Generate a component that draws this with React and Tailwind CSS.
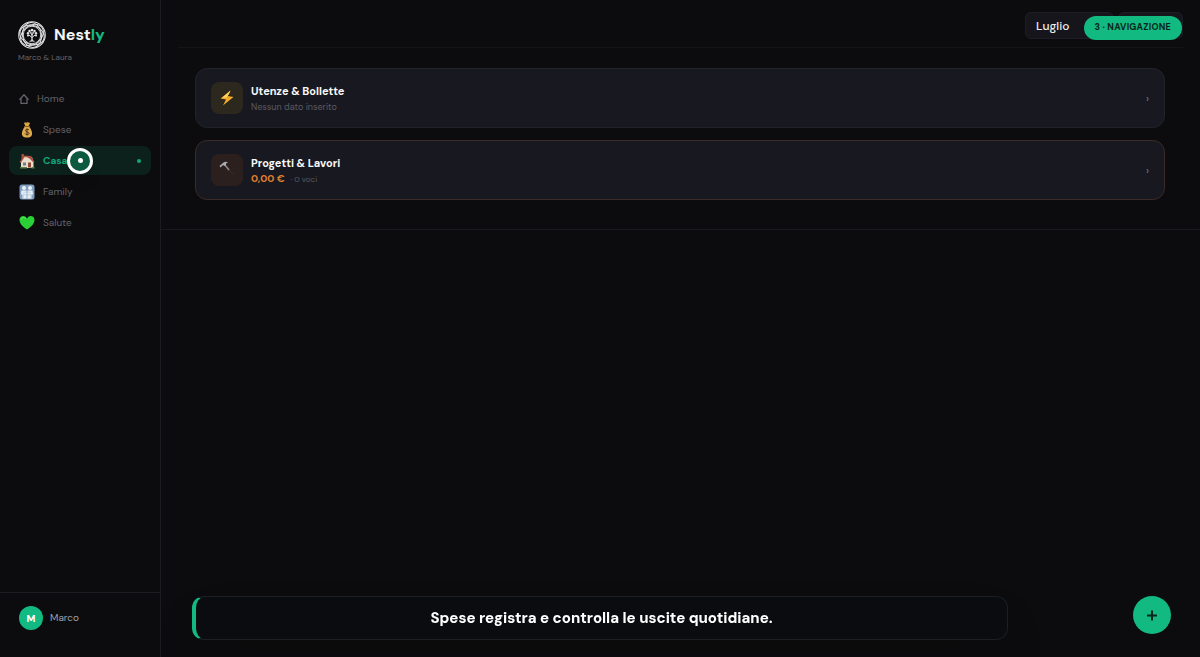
import React from "react";

const base = "block shrink-0";

function Logo() {
  return (
    <svg viewBox="0 0 56 56" className={`${base} size-7`} fill="none" stroke="#e4e4e4" aria-hidden="true">
      <circle cx="28" cy="28" r="26.5" strokeWidth="2.2" />
      <circle cx="28" cy="28" r="17.5" strokeWidth="1.8" />
      <ellipse cx="28" cy="28" rx="25" ry="19" strokeWidth="2" transform="rotate(20 28 28)" />
      <ellipse cx="28" cy="28" rx="25" ry="19" strokeWidth="2" transform="rotate(80 28 28)" />
      <ellipse cx="28" cy="28" rx="25" ry="19" strokeWidth="2" transform="rotate(140 28 28)" />
      <path d="M28 39V22M28 33l-6-5M28 33l6-5M28 28l-4-6M28 28l4-6" strokeWidth="2" strokeLinecap="round" />
      <path d="M23 40.5c3 0 4-2 5-4 1 2 2 4 5 4Z" fill="#e4e4e4" strokeWidth="1" />
      <g fill="#e4e4e4" stroke="none">
        <circle cx="28" cy="18" r="2.6" />
        <circle cx="23" cy="20" r="2.5" />
        <circle cx="33" cy="20" r="2.5" />
        <circle cx="20" cy="24.5" r="2.4" />
        <circle cx="36" cy="24.5" r="2.4" />
        <circle cx="20" cy="29" r="2.1" />
        <circle cx="36" cy="29" r="2.1" />
      </g>
    </svg>
  );
}

function HomeIcon() {
  return (
    <svg viewBox="0 0 10 12" className={`${base} h-3 w-2.5`} fill="none" stroke="currentColor" strokeWidth="1.3" aria-hidden="true">
      <path d="M2 10.3V6H1.2L5 1.8 8.8 6H8v4.3H2Z" />
    </svg>
  );
}

function MoneyIcon() {
  return (
    <svg viewBox="0 0 32 32" className={`${base} size-4`} aria-hidden="true">
      <path d="M10 2c2-2 4 0 6-1 2-1 4 0 6 1l-3 7h-6Z" fill="#d9a441" />
      <path d="M13 8h6c4 4 8 11 7 17-1 5-5 6-10 6S7 30 6 25c-1-6 3-13 7-17Z" fill="#dca94d" />
      <path d="M11 9h10" stroke="#8a5b1e" strokeWidth="2.4" strokeLinecap="round" />
      <path d="M20 16c-1-2-7-2-7 1 0 4 7 2 7 6 0 3-7 3-8 0M16 13v14" fill="none" stroke="#4b3313" strokeWidth="2" />
    </svg>
  );
}

function HouseIcon() {
  return (
    <svg viewBox="0 0 32 32" className={`${base} size-4`} aria-hidden="true">
      <path d="M5 2h5v11H5Z" fill="#a9483b" />
      <path d="M4 15 12 6l14 2 3 10v12H4Z" fill="#e9dcc8" />
      <path d="m1 18 10-13 13 1 7 12-2 1-8-8-6-3L4 20Z" fill="#a94f40" />
      <path d="m4 19 8-12 9 12Z" fill="#e9dcc8" />
      <path d="M18 19h6v10h-6Z" fill="#8c4936" />
      <path d="M8 19h6v6H8Z" fill="#5f8196" />
      <path d="M2 28h14v3H2ZM25 28h6v3h-6Z" fill="#5f7d46" />
    </svg>
  );
}

function FamilyIcon() {
  return (
    <svg viewBox="0 0 32 32" className={`${base} size-4`} aria-hidden="true">
      <rect x="1" y="1" width="30" height="30" rx="5" fill="#7f9dbc" />
      <g fill="#e9f1f8">
        <circle cx="10" cy="8" r="4" />
        <circle cx="22" cy="8" r="4" />
        <path d="M5 13h10v16H7v-8H4ZM17 13h10l1 8h-3v8h-8Z" />
      </g>
      <g fill="#e9f1f8" stroke="#a9c0d6">
        <circle cx="12" cy="19" r="3" />
        <circle cx="20" cy="19" r="3" />
        <path d="M9 22h6v7H9ZM17 22h6v7h-6Z" />
      </g>
    </svg>
  );
}

function HeartIcon() {
  return (
    <svg viewBox="0 0 32 32" className={`${base} size-4`} aria-hidden="true">
      <path d="M16 29C8 24 1 17 1 10 1 1 12-1 16 7c4-8 15-6 15 3 0 7-7 14-15 19Z" fill="#2bcf36" />
      <path d="M4 9c1-4 6-6 9-2" fill="none" stroke="#6be56c" strokeWidth="2" strokeLinecap="round" />
    </svg>
  );
}

function BoltIcon() {
  return (
    <svg viewBox="0 0 32 32" className={`${base} size-4`} aria-hidden="true">
      <path d="M23 1 3 17l11 2-6 12 21-17-12-2Z" fill="#f3a92c" />
      <path d="M23 1 6 16l9-1 5-7Z" fill="#ffd75e" />
    </svg>
  );
}

function HammerIcon() {
  return (
    <svg viewBox="0 0 32 32" className={`${base} size-4`} aria-hidden="true">
      <path d="m13 12 15 16" stroke="#3c302e" strokeWidth="1.8" />
      <path d="m11 9 9 11" stroke="#8f8b89" strokeWidth="3" />
      <path d="m1 12 8-7c3-2 6-2 9 0l-4 2v3l-3 2-3-2-5 5Z" fill="#a9adb1" />
    </svg>
  );
}

const navItems = [
  { label: "Home", icon: <HomeIcon /> },
  { label: "Spese", icon: <MoneyIcon /> },
  { label: "Casa", icon: <HouseIcon />, active: true },
  { label: "Family", icon: <FamilyIcon /> },
  { label: "Salute", icon: <HeartIcon /> },
];

function Sidebar() {
  return (
    <aside className="flex w-[161px] shrink-0 flex-col border-r border-[#1b1b20] bg-[#0c0c0f]">
      <div className="px-[18px] pt-[21px]">
        <div className="flex items-center gap-2">
          <Logo />
          <h1 className="text-base leading-7 font-extrabold text-[#f3f3f3]">
            Nest<span className="text-[#12b981]">ly</span>
          </h1>
        </div>
        <p className="mt-0.5 text-[8px] leading-3 text-[#66666b]">Marco &amp; Laura</p>
      </div>
      <nav className="mt-[21px] flex flex-col gap-0.5 px-[9px]">
        {navItems.map((item) => (
          <a
            key={item.label}
            href={`#${item.label.toLowerCase()}`}
            aria-current={item.active ? "page" : undefined}
            className={`relative flex h-[29px] items-center gap-2 rounded-lg pl-2.5 text-[10px] ${
              item.active ? "bg-[#0d211c] font-bold text-[#12a677]" : "text-[#626267]"
            }`}
          >
            {item.icon}
            <span>{item.label}</span>
            {item.active && (
              <>
                <span className="mr-2.5 ml-auto size-1 rounded-full bg-[#12a677]" />
                <span className="absolute top-1/2 left-1/2 flex size-[26px] -translate-1/2 items-center justify-center rounded-full border-[3px] border-white bg-[#0c5940] shadow-lg">
                  <span className="size-[5px] rounded-full bg-white" />
                </span>
              </>
            )}
          </a>
        ))}
      </nav>
      <div className="mt-auto flex h-[65px] items-start gap-[7px] border-t border-[#1b1b20] px-[19px] pt-[13px]">
        <span className="flex size-6 items-center justify-center rounded-full bg-[#12b981] text-[10px] font-extrabold text-white">M</span>
        <span className="text-[10px] leading-6 text-[#a0a0a4]">Marco</span>
      </div>
    </aside>
  );
}

function Card({ icon, tile, border, title, children }) {
  return (
    <button type="button" className={`flex h-[60px] w-full items-center gap-2 rounded-xl border bg-[#181820] px-[15px] text-left ${border}`}>
      <span className={`flex size-8 shrink-0 rounded-lg ${tile}`}>{icon}</span>
      <span className="flex flex-1 flex-col pt-px">
        <span className="text-[11px] leading-4 font-bold text-[#f8f8f8]">{title}</span>
        <span className="flex items-center gap-1.5 leading-4 text-[#5a5a60]">{children}</span>
      </span>
      <span className="text-[11px] text-[#7a7a80]" aria-hidden="true">›</span>
    </button>
  );
}

export default function App() {
  return (
    <div className="flex min-h-screen bg-[#0c0c0e] font-['DM_Sans',Inter,sans-serif]">
      <Sidebar />
      <main className="relative flex min-w-0 flex-1 flex-col">
        <header className="mx-[17px] flex h-12 items-start justify-end gap-1 border-b border-[#141417] pt-3">
          <button type="button" className="h-[27px] w-[89px] rounded-md border border-[#1e1e26] bg-[#15151b] pl-2.5 text-left text-[12px] font-medium text-[#eeeeee]">
            Luglio
          </button>
          <button type="button" aria-label="Anno" className="h-[27px] w-[65px] rounded-md border border-[#1e1e26] bg-[#15151b]" />
        </header>
        <span className="absolute top-4 right-[18px] flex h-6 items-center rounded-full bg-[#12b981] px-[11px] text-[9px] font-extrabold tracking-wide text-[#06281c]">
          3 · NAVIGAZIONE
        </span>
        <section className="flex flex-col gap-3 border-b border-[#19191e] pt-5 pr-[35px] pb-[29px] pl-[34px]">
          <Card title="Utenze & Bollette" icon={<BoltIcon />} tile="items-center justify-center bg-[#2c281d]" border="border-[#22222b]">
            <span className="text-[9px]">Nessun dato inserito</span>
          </Card>
          <Card title="Progetti & Lavori" icon={<HammerIcon />} tile="items-start justify-start pt-1.5 pl-2 bg-[#2c201f]" border="border-[#3b2a26]">
            <strong className="text-[10px] text-[#e68233]">0,00 €</strong>
            <span className="text-[8px]">· 0 voci</span>
          </Card>
        </section>
      </main>
      <div className="fixed right-[16%] bottom-[17px] left-[16%] flex h-11 items-center justify-center rounded-xl border border-l-4 border-[#1c1f23] border-l-[#12b981] bg-[#0a0c10] px-4 shadow-2xl">
        <p className="text-[15px] font-extrabold text-white">Spese registra e controlla le uscite quotidiane.</p>
      </div>
      <button type="button" aria-label="Aggiungi" className="fixed right-[29px] bottom-[23px] flex size-[38px] items-center justify-center rounded-full bg-[#12b981] text-[#07261c]">
        <svg viewBox="0 0 12 12" className="size-3" stroke="currentColor" strokeWidth="2" aria-hidden="true">
          <path d="M6 1.5v10M1 6.500h10" />
        </svg>
      </button>
    </div>
  );
}
